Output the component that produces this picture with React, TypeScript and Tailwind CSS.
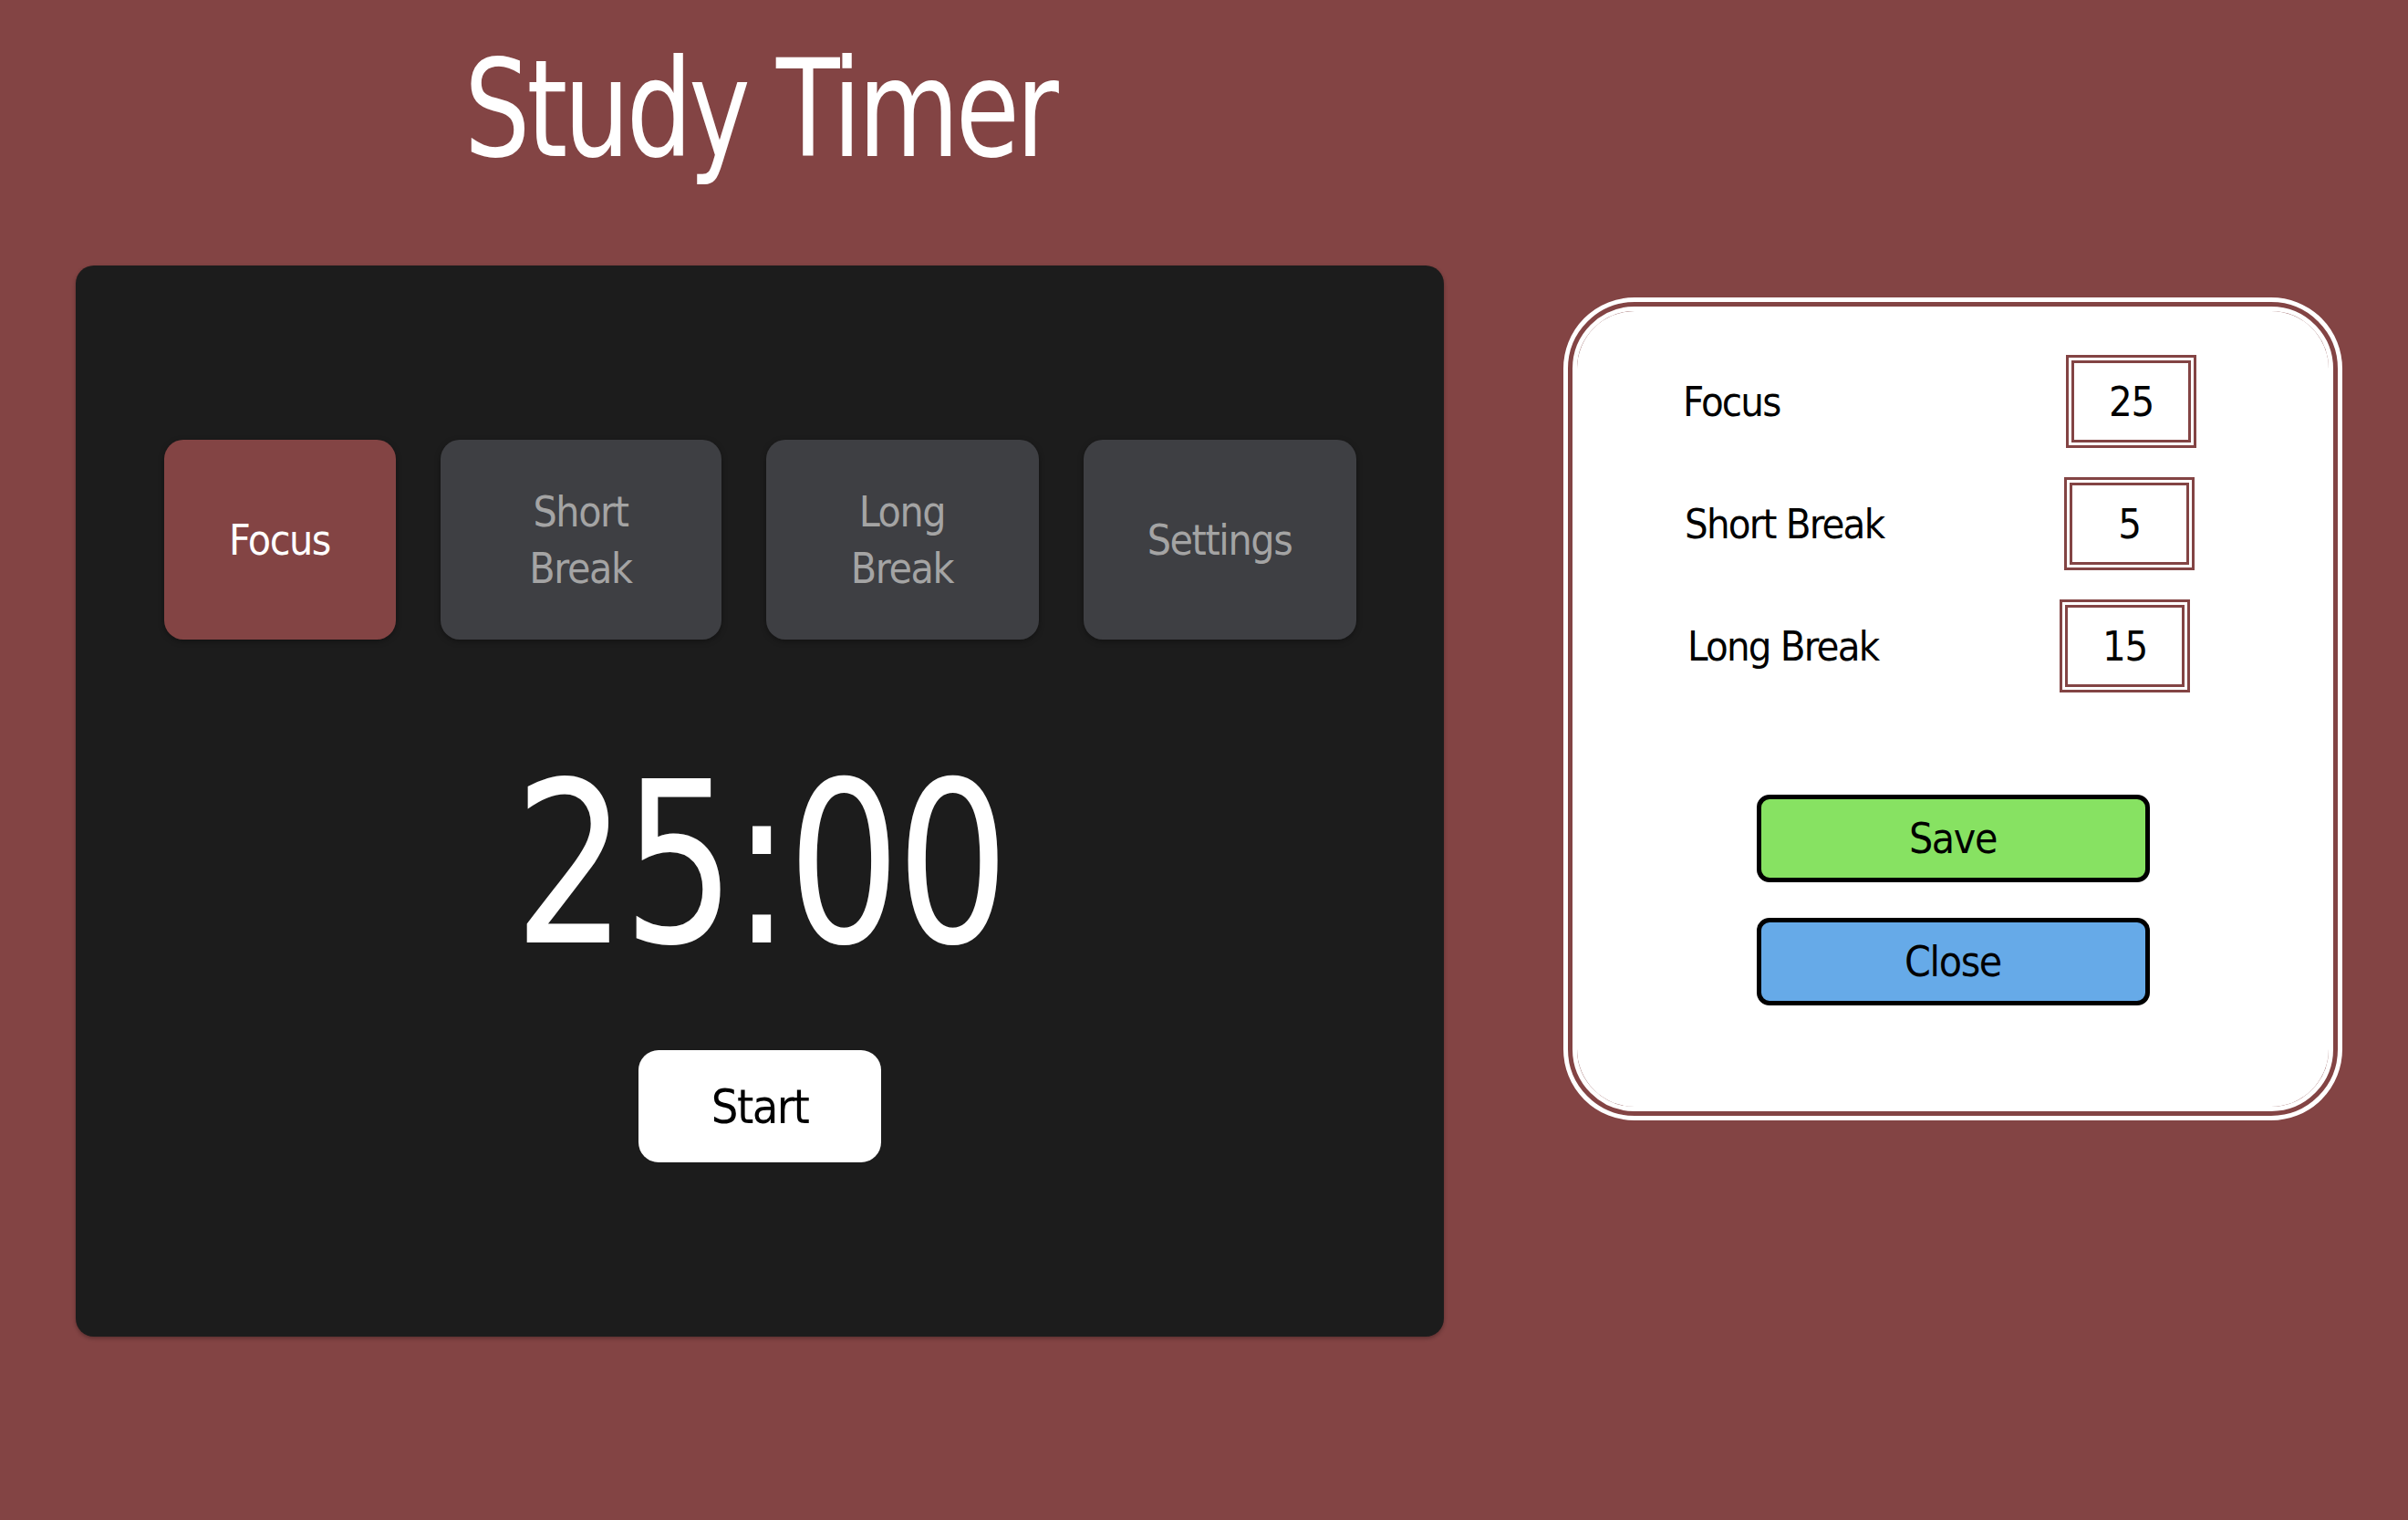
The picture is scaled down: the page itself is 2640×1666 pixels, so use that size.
import { useState } from "react";

type Mode = "focus" | "short" | "long";

const modes: { key: Mode | "settings"; label: string; w: string }[] = [
  { key: "focus", label: "Focus", w: "w-[254px]" },
  { key: "short", label: "Short Break", w: "w-[308px]" },
  { key: "long", label: "Long Break", w: "w-[299px]" },
  { key: "settings", label: "Settings", w: "w-[299px]" },
];

function TabButton({ label, w, active, onClick }: { label: string; w: string; active: boolean; onClick: () => void }) {
  const words = label.split(" ");
  return (
    <button
      onClick={onClick}
      className={`${w} h-[219px] rounded-[21px] flex flex-col items-center justify-center text-[46px] leading-[62px] tracking-[-0.03em] shadow-[0_2px_6px_rgba(0,0,0,0.35)] ${
        active ? "bg-[#834444] text-white" : "bg-[#3e3f43] text-[#a4a4a4]"
      }`}
    >
      {words.map((wd) => (
        <span key={wd}>{wd}</span>
      ))}
    </button>
  );
}

function SettingRow({ label, value, pad, labelW }: { label: string; value: string; pad: string; labelW: string }) {
  return (
    <div className={`flex items-center ${pad}`}>
      <div className={`${labelW} text-[45px] leading-none tracking-[-0.04em] text-black`}>{label}</div>
      <div className="w-[143px] h-[102px] border-[9px] border-double border-[#834444] flex items-center justify-center text-[45px] leading-none tracking-[-0.03em] text-black">
        {value}
      </div>
    </div>
  );
}

export default function App() {
  const [mode, setMode] = useState<Mode>("focus");
  const [open, setOpen] = useState(true);

  return (
    <div className="min-h-[1666px] w-full bg-[#834444] font-['DejaVu_Sans',sans-serif] font-stretch-condensed flex items-start pl-[83px]">
      <div className="w-[1500px] flex flex-col">
        <h1 className="mt-[46px] text-center text-white text-[148px] leading-none tracking-[-0.03em]">
          <span className="inline-block scale-x-[0.855]">Study Timer</span>
        </h1>
        <div className="mt-[97px] h-[1174px] bg-[#1c1c1c] rounded-[20px] shadow-[0_2px_4px_rgba(0,0,0,0.3)] flex flex-col items-center">
          <div className="mt-[191px] flex gap-[49px]">
            {modes.map((m) => (
              <TabButton
                key={m.key}
                label={m.label}
                w={m.w}
                active={m.key === mode}
                onClick={() => {
                  if (m.key === "settings") setOpen(true);
                  else setMode(m.key);
                }}
              />
            ))}
          </div>
          <div className="mt-[123px] text-white text-[247px] leading-none tracking-[-0.02em] scale-x-[0.875]">25:00</div>
          <button className="mt-[80px] w-[266px] h-[123px] bg-white rounded-[22px] text-black text-[52px] leading-none tracking-[-0.03em]">
            Start
          </button>
        </div>
      </div>

      {open && (
        <div className="ml-[131px] mt-[326px] w-[854px] h-[902px] rounded-[78px] border-[15px] border-double border-white bg-white bg-clip-padding flex flex-col">
          <div className="mt-[48px] flex flex-col gap-[32px]">
            <SettingRow label="Focus" value="25" pad="pl-[116px]" labelW="w-[420px]" />
            <SettingRow label="Short Break" value="5" pad="pl-[118px]" labelW="w-[416px]" />
            <SettingRow label="Long Break" value="15" pad="pl-[121px]" labelW="w-[408px]" />
          </div>
          <div className="mt-[112px] flex flex-col items-center gap-[39px]">
            <button className="w-[431px] h-[96px] bg-[#87e262] border-[5px] border-black rounded-[14px] text-black text-[46px] leading-none tracking-[-0.03em]">
              Save
            </button>
            <button
              onClick={() => setOpen(false)}
              className="w-[431px] h-[96px] bg-[#66aae8] border-[5px] border-black rounded-[14px] text-black text-[46px] leading-none tracking-[-0.03em]"
            >
              Close
            </button>
          </div>
        </div>
      )}
    </div>
  );
}
